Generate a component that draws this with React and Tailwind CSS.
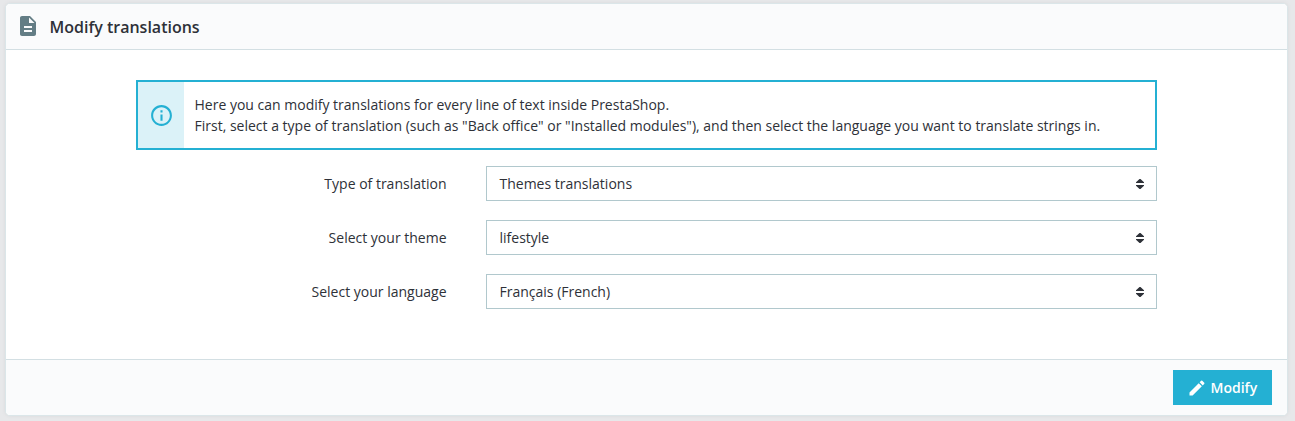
const fields = [
  { label: "Type of translation", value: "Themes translations" },
  { label: "Select your theme", value: "lifestyle" },
  { label: "Select your language", value: "Français (French)" },
];

function MaterialIcon({ path, className }) {
  return (
    <svg viewBox="0 0 24 24" fill="currentColor" className={className} aria-hidden="true">
      <path d={path} />
    </svg>
  );
}

const DESCRIPTION =
  "M14 2H6c-1.1 0-1.99.9-1.99 2L4 20c0 1.1.89 2 1.99 2H18c1.1 0 2-.9 2-2V8l-6-6zm2 16H8v-2h8v2zm0-4H8v-2h8v2zm-3-5V3.5L18.500 9H13z";
const INFO =
  "M11 7h2v2h-2zm0 4h2v6h-2zm1-9C6.480 2 2 6.480 2 12s4.480 10 10 10 10-4.480 10-10S17.520 2 12 2zm0 18c-4.410 0-8-3.590-8-8s3.590-8 8-8 8 3.590 8 8-3.590 8-8 8z";
const EDIT =
  "M3 17.250V21h3.750L17.810 9.940l-3.750-3.750L3 17.250zM20.710 7.040a1 1 0 0 0 0-1.410l-2.340-2.340a1 1 0 0 0-1.410 0l-1.830 1.830 3.750 3.750 1.830-1.830z";

function SelectRow({ label, value }) {
  return (
    <div className="flex items-center">
      <span className="w-[311px] pr-[0.5px] text-right">{label}</span>
      <button
        type="button"
        aria-label={label}
        className="ml-[39px] flex h-[35px] w-[671px] items-center justify-between border border-[#b1c8cd] bg-white pr-3 pl-[12.5px] text-left"
      >
        <span>{value}</span>
        <svg viewBox="0 0 8 10" className="h-[10px] w-2" fill="#2e3138" aria-hidden="true">
          <path d="M3.500 0h1L8 3.300V4H0v-.7zM0 6h8v.7L4.500 10h-1L0 6.700z" />
        </svg>
      </button>
    </div>
  );
}

export default function App() {
  return (
    <div className="flex h-[421px] w-[1295px] bg-[#e7e8ea] pt-[3px] pr-[7px] pb-[5px] pl-[5px] font-['Open_Sans',sans-serif] text-[14px] leading-[21px] text-[#2e3138]">
      <main className="flex flex-1 flex-col overflow-hidden rounded-[5px] border border-[#dbe6e9] bg-white shadow-[0_0_4px_rgba(0,0,0,0.06)]">
        <header className="flex h-[46px] items-center border-b border-[#d3dfe3] bg-[#fafbfc] pl-[10px]">
          <MaterialIcon path={DESCRIPTION} className="mr-[9.5px] mb-px size-6 text-[#637d85]" />
          <h1 className="pt-[2px] text-[16px] font-semibold">Modify translations</h1>
        </header>
        <section className="flex flex-1 flex-col pt-[30px] pl-[130px]">
          <div className="mb-4 flex h-[70px] w-[1021px] border-2 border-[#24b0d3]">
            <div className="flex w-[46px] items-center justify-center bg-[#dbf2f8] text-[#24b0d3]">
              <MaterialIcon path={INFO} className="size-[25px]" />
            </div>
            <p className="flex-1 pt-3 pl-[10.5px]">
              Here you can modify translations for every line of text inside PrestaShop.
              <br />
              First, select a type of translation (such as "Back office" or "Installed modules"), and then select the
              language you want to translate strings in.
            </p>
          </div>
          <div className="flex flex-col gap-[19px]">
            {fields.map((field) => (
              <SelectRow key={field.label} {...field} />
            ))}
          </div>
        </section>
        <footer className="flex h-14 items-center justify-end border-t border-[#d3dfe3] bg-[#fafbfc] pr-[15px]">
          <button
            type="button"
            className="flex h-[35px] w-[99px] items-center bg-[#24b0d3] pl-[14px] font-semibold text-white"
          >
            <MaterialIcon path={EDIT} className="mr-[3.5px] size-5" />
            Modify
          </button>
        </footer>
      </main>
    </div>
  );
}
